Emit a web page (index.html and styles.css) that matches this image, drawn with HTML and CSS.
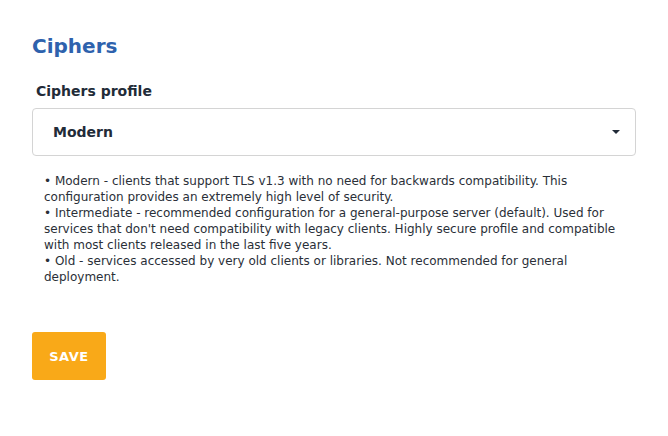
FILE: index.html
```html
<!DOCTYPE html>
<html>

<head>
    <title>Ciphers</title>
    <link rel="stylesheet" href="styles.css">
</head>

<body>
    <div class="container">
        <h1 class="title">Ciphers</h1>

        <div class="section">
            <label class="form-label" for="profile">Ciphers profile</label>
            <div class="select-wrap">
                <select class="form-select" id="profile" name="profile">
                    <option value="modern">Modern</option>
                    <option value="intermediate">Intermediate</option>
                    <option value="old">Old</option>
                </select>
                <span class="select-arrow"></span>
            </div>
            <div class="help">
                <div>• Modern - clients that support TLS v1.3 with no need for backwards compatibility. This configuration provides an extremely high level of security.</div>
                <div>• Intermediate - recommended configuration for a general-purpose server (default). Used for services that don't need compatibility with legacy clients. Highly secure profile and compatible with most clients released in the last five years.</div>
                <div>• Old - services accessed by very old clients or libraries. Not recommended for general deployment.</div>
            </div>
        </div>

        <button class="save-button" type="submit">SAVE</button>
    </div>
</body>

</html>
```

FILE: styles.css
```css
body {
    font-family: "DejaVu Sans", sans-serif;
    margin: 0;
    background-color: #fff;
    color: #222b38;
}

.container {
    padding: 34px 32px 0 32px;
}

.title {
    margin: 0 0 24px 0;
    font-size: 20px;
    font-weight: bold;
    color: #2e62ad;
    line-height: 24px;
}

.section {
    margin-bottom: 47px;
}

.form-label {
    display: block;
    margin: 0 0 8px 4px;
    font-size: 14px;
    font-weight: bold;
    line-height: 18px;
}

.select-wrap {
    position: relative;
}

.form-select {
    display: block;
    width: 100%;
    height: 48px;
    padding: 0 20px;
    border: 1px solid #d4d4d4;
    border-radius: 4px;
    background-color: #fff;
    font-family: inherit;
    font-size: 14px;
    font-weight: bold;
    color: #222b38;
    appearance: none;
    -webkit-appearance: none;
    box-sizing: border-box;
}

.select-arrow {
    position: absolute;
    right: 16px;
    top: 22px;
    width: 0;
    height: 0;
    border-left: 4px solid transparent;
    border-right: 4px solid transparent;
    border-top: 4px solid #222b38;
}

.help {
    margin: 17px 0 0 12px;
    padding-right: 10px;
    font-size: 12px;
    line-height: 16px;
    color: #2a2f38;
}

.save-button {
    display: block;
    width: 74px;
    height: 48px;
    padding: 0;
    background-color: #f9a918;
    color: #fff;
    border: none;
    border-radius: 3px;
    font-family: inherit;
    font-size: 13px;
    font-weight: bold;
    letter-spacing: 0.5px;
    cursor: pointer;
}
```
